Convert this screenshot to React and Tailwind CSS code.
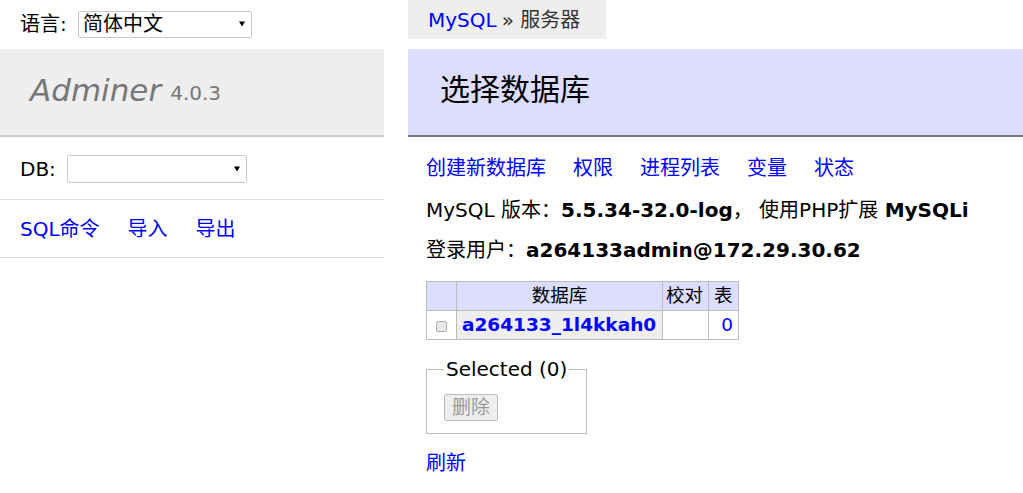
const font = { fontFamily: '"DejaVu Sans", Verdana, "Noto Sans CJK SC", sans-serif' }

function SelectBox({ value, className }) {
  return (
    <div className={`relative flex items-center border border-[#c8c8c8] rounded-[2px] bg-white ${className}`}>
      <span className="pl-[4px] text-[20px] leading-none text-black">{value}</span>
      <span className="absolute right-[6px] top-1/2 -translate-y-1/2 w-0 h-0 border-l-[3px] border-r-[3px] border-t-[5px] border-l-transparent border-r-transparent border-t-black" />
    </div>
  )
}

export default function App() {
  return (
    <div className="flex w-[1023px] h-[493px] bg-white text-black text-[20px] leading-[24px]" style={font}>
      {/* left menu */}
      <div className="w-[384px] shrink-0">
        <div className="flex items-center h-[49px] pl-[20px] pb-[1px]">
          <span className="w-[58px]">语言:</span>
          <SelectBox value="简体中文" className="w-[174px] h-[27px]" />
        </div>
        <div className="h-[88px] bg-[#eeeeee] border-b-[2px] border-[#cccccc] flex items-center pl-[30px] pb-[4px]">
          <span className="italic text-[31px] leading-[36px] text-[#777777]">Adminer</span>
          <span className="ml-[9px] mt-[6px] text-[20px] text-[#777777]">4.0.3</span>
        </div>
        <div className="h-[63px] border-b border-[#dddddd] flex items-center pl-[20px] pt-[2px]">
          <span className="w-[47px]">DB:</span>
          <SelectBox value="" className="w-[180px] h-[28px]" />
        </div>
        <div className="h-[58px] border-b border-[#dddddd] flex items-center pl-[20px] gap-[28px] text-[#0000ff]">
          <a>SQL命令</a>
          <a>导入</a>
          <a>导出</a>
        </div>
      </div>

      {/* content */}
      <div className="flex-1 ml-[24px]">
        <div className="flex items-center h-[39px] w-[198px] bg-[#eeeeee] pl-[20px] mb-[10px]">
          <a className="text-[#0000ff]">MySQL</a>
          <span className="ml-[5px] text-[#333333]">» 服务器</span>
        </div>
        <div className="h-[88px] bg-[#ddddff] border-b-[2px] border-[#777777] flex items-center pl-[32px] pb-[4px]">
          <h2 className="text-[30px] leading-[36px] font-normal">选择数据库</h2>
        </div>

        <div className="pl-[18px]">
          <div className="flex gap-[27px] mt-[19px] text-[#0000ff]">
            <a>创建新数据库</a>
            <a>权限</a>
            <a>进程列表</a>
            <a>变量</a>
            <a>状态</a>
          </div>
          <p className="mt-[18px]">
            MySQL 版本：<b>5.5.34-32.0-log</b>，&nbsp;使用PHP扩展 <b>MySQLi</b>
          </p>
          <p className="mt-[16px]">
            登录用户：<b>a264133admin@172.29.30.62</b>
          </p>

          <table className="mt-[19px] border-collapse border border-[#bbbbbb] text-[18.5px] leading-[22px]">
            <thead>
              <tr className="bg-[#ddddff] h-[29px]">
                <td className="border border-[#bbbbbb] w-[30px]"></td>
                <th className="border border-[#bbbbbb] w-[206px] font-normal">数据库</th>
                <td className="border border-[#bbbbbb] w-[46px] px-[3px]">校对</td>
                <td className="border border-[#bbbbbb] w-[30px] px-[5px]">表</td>
              </tr>
            </thead>
            <tbody>
              <tr className="h-[29px]">
                <td className="border border-[#bbbbbb] text-center">
                  <span className="inline-block w-[11px] h-[11px] border border-[#aaaaaa] rounded-[2px] bg-[#e8e8e8] align-middle" />
                </td>
                <th className="border border-[#bbbbbb] bg-[#eeeeee] text-left px-[5px] font-bold text-[#0000ff]">a264133_1l4kkah0</th>
                <td className="border border-[#bbbbbb]"></td>
                <td className="border border-[#bbbbbb] text-right px-[5px] text-[#0000ff]">0</td>
              </tr>
            </tbody>
          </table>

          <fieldset className="mt-[17px] w-[161px] h-[77px] border border-[#bbbbbb] pl-[17px] pr-[4px]">
            <legend className="px-[2px] text-[20px] whitespace-nowrap">Selected (0)</legend>
            <button disabled className="block mt-[13px] w-[54px] h-[27px] border border-[#bbbbbb] rounded-[2px] bg-[#eeeeee] text-[#999999] text-[19px] leading-none">删除</button>
          </fieldset>

          <a className="block mt-[17px] text-[#0000ff]">刷新</a>
        </div>
      </div>
    </div>
  )
}
